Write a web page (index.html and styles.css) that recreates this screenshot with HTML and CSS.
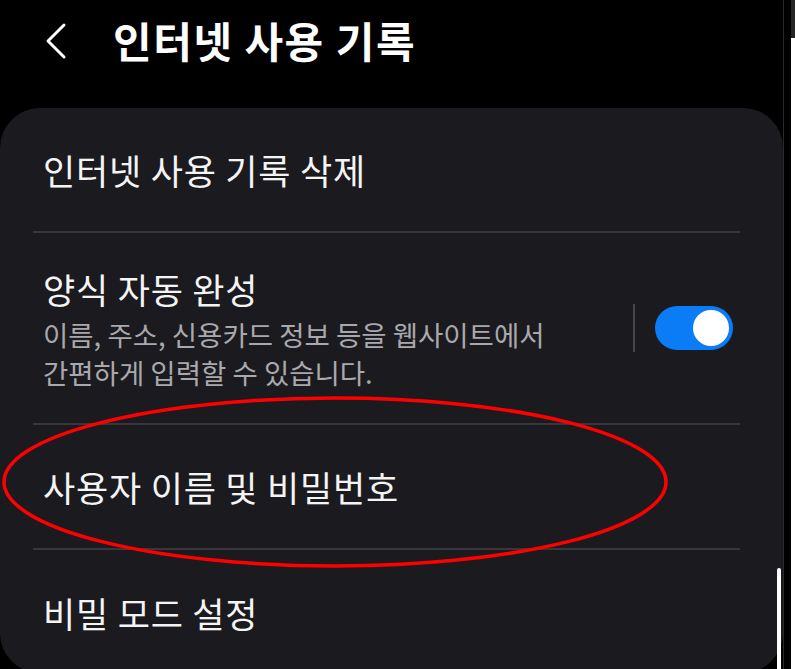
FILE: index.html
```html
<!DOCTYPE html>
<html>

<head>
    <link rel="stylesheet" href="styles.css">
</head>

<body>

    <div class="screen">
        <div class="header">
            <svg class="back" width="26" height="38" viewBox="0 0 26 38">
                <path d="M21 3 L5 19 L21 35" fill="none" stroke="#fff" stroke-width="3" stroke-linecap="round" stroke-linejoin="round"/>
            </svg>
            <h1>인터넷 사용 기록</h1>
        </div>

        <div class="card">
            <div class="row row-single">
                <span class="row-title">인터넷 사용 기록 삭제</span>
            </div>
            <div class="row row-switch">
                <div class="row-text">
                    <span class="row-title">양식 자동 완성</span>
                    <p class="row-sub">이름, 주소, 신용카드 정보 등을 웹사이트에서<br>간편하게 입력할 수 있습니다.</p>
                </div>
                <div class="switch-area">
                    <span class="vline"></span>
                    <span class="toggle"><span class="knob"></span></span>
                </div>
            </div>
            <div class="row row-single">
                <span class="row-title">사용자 이름 및 비밀번호</span>
            </div>
            <div class="row row-single last">
                <span class="row-title">비밀 모드 설정</span>
            </div>
        </div>

        <!-- red annotation circle -->
        <svg class="mark" width="680" height="180" viewBox="0 0 680 180">
            <ellipse cx="333" cy="87" rx="331" ry="84" fill="none" stroke="#ff0000" stroke-width="3.5"/>
        </svg>

        <span class="scroll-thumb"></span>
    </div>

    <div class="edge"></div>

</body>

</html>
```

FILE: styles.css
```css
body {
    margin: 0;
    background-color: #000;
    font-family: "Noto Sans CJK KR", "Noto Sans", sans-serif;
    width: 795px;
    height: 669px;
    overflow: hidden;
    display: flex;
}

.screen {
    position: relative;
    width: 783px;
    border-right: 1px solid #2a2a2a;
    height: 669px;
    overflow: hidden;
}

.edge {
    margin-left: 7px;
    width: 4px;
    height: 669px;
    background: linear-gradient(#262626 0, #262626 38px, #fff 38px);
}

.header {
    height: 108px;
    display: flex;
    align-items: flex-start;
    padding-left: 43px;
    box-sizing: border-box;
    padding-top: 19px;
}

.back {
    margin-top: 3px;
    margin-right: 44px;
}

.header h1 {
    margin: 0;
    color: #fff;
    font-size: 42px;
    font-weight: bold;
    line-height: 42px;
    letter-spacing: 1.5px;
}

.card {
    background-color: #1b1a1f;
    border-radius: 40px;
    padding: 0 43px 0 33px;
    height: 565px;
}

.row {
    border-bottom: 2px solid #38373d;
    padding-left: 10px;
    display: flex;
    align-items: center;
    box-sizing: border-box;
}

.row-single {
    height: 125px;
}

.row.last {
    border-bottom: none;
}

.row-title {
    color: #f4f4f4;
    font-size: 35px;
    line-height: 40px;
    letter-spacing: 0.8px;
}

.row-switch {
    height: 192px;
    justify-content: space-between;
}

.row-text {
    padding-top: 4px;
}

.row-sub {
    margin: 6px 0 0;
    color: #a9a9ad;
    font-size: 27.5px;
    line-height: 38px;
}

.switch-area {
    display: flex;
    align-items: center;
    padding-right: 7px;
}

.vline {
    width: 2px;
    height: 48px;
    background-color: #45444a;
    margin-right: 20px;
}

.toggle {
    width: 78px;
    height: 44px;
    border-radius: 22px;
    background-color: #0b7cf5;
    display: flex;
    align-items: center;
    justify-content: flex-end;
    padding-right: 4px;
    box-sizing: border-box;
}

.knob {
    width: 36px;
    height: 36px;
    border-radius: 50%;
    background-color: #fff;
}

.mark {
    position: absolute;
    left: 2px;
    top: 395px;
}

.scroll-thumb {
    position: absolute;
    left: 777px;
    top: 568px;
    width: 4px;
    height: 110px;
    border-radius: 3px 3px 0 0;
    background-color: #fff;
}
```
